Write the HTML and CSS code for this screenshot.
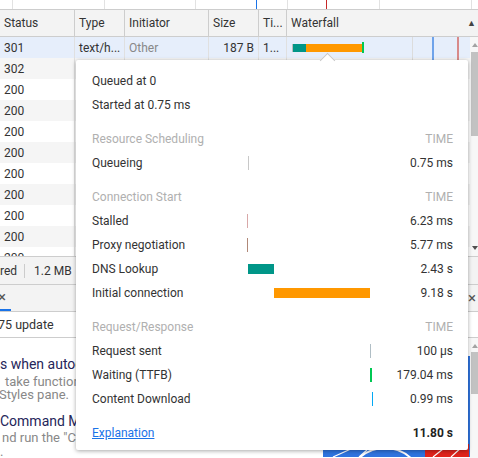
FILE: index.html
```html
<!DOCTYPE html>
<html>
<head>
<meta charset="utf-8">
<link rel="stylesheet" href="styles.css">
</head>
<body>
<div class="app">
  <div class="overview">
    <span class="ov-cell c1"></span><span class="ov-cell c2"></span><span class="ov-cell c3"></span><span class="ov-cell c4"></span><span class="ov-cell c5"></span><span class="ov-cell c6"></span><span class="ov-rest"></span>
    <span class="ov-mark blue" style="left:256px"></span>
    <span class="ov-mark red" style="left:326px"></span>
  </div>

  <div class="hdr">
    <div class="hc w-status">Status</div>
    <div class="hc w-type">Type</div>
    <div class="hc w-init">Initiator</div>
    <div class="hc w-size">Size</div>
    <div class="hc w-time">Ti...</div>
    <div class="hc w-wf">Waterfall<span class="sort">&#9650;</span></div>
  </div>

  <div class="net">
    <div class="rows">
      <div class="row sel">
        <div class="dc w-status">301</div>
        <div class="dc w-type">text/h...</div>
        <div class="dc w-init muted">Other</div>
        <div class="dc w-size right">187 B</div>
        <div class="dc w-time">1...</div>
        <div class="dc w-wf wf">
          <span class="wbar">
            <span class="wq"></span><span class="wd"></span><span class="wc"></span><span class="ww"></span>
          </span>
        </div>
      </div>
      <div class="row"><div class="dc w-status">302</div><div class="dc w-type"></div><div class="dc w-init"></div><div class="dc w-size"></div><div class="dc w-time"></div><div class="dc w-wf wf"></div></div>
      <div class="row"><div class="dc w-status">200</div><div class="dc w-type"></div><div class="dc w-init"></div><div class="dc w-size"></div><div class="dc w-time"></div><div class="dc w-wf wf"></div></div>
      <div class="row"><div class="dc w-status">200</div><div class="dc w-type"></div><div class="dc w-init"></div><div class="dc w-size"></div><div class="dc w-time"></div><div class="dc w-wf wf"></div></div>
      <div class="row"><div class="dc w-status">200</div><div class="dc w-type"></div><div class="dc w-init"></div><div class="dc w-size"></div><div class="dc w-time"></div><div class="dc w-wf wf"></div></div>
      <div class="row"><div class="dc w-status">200</div><div class="dc w-type"></div><div class="dc w-init"></div><div class="dc w-size"></div><div class="dc w-time"></div><div class="dc w-wf wf"></div></div>
      <div class="row"><div class="dc w-status">200</div><div class="dc w-type"></div><div class="dc w-init"></div><div class="dc w-size"></div><div class="dc w-time"></div><div class="dc w-wf wf"></div></div>
      <div class="row"><div class="dc w-status">200</div><div class="dc w-type"></div><div class="dc w-init"></div><div class="dc w-size"></div><div class="dc w-time"></div><div class="dc w-wf wf"></div></div>
      <div class="row"><div class="dc w-status">200</div><div class="dc w-type"></div><div class="dc w-init"></div><div class="dc w-size"></div><div class="dc w-time"></div><div class="dc w-wf wf"></div></div>
      <div class="row"><div class="dc w-status">200</div><div class="dc w-type"></div><div class="dc w-init"></div><div class="dc w-size"></div><div class="dc w-time"></div><div class="dc w-wf wf"></div></div>
      <div class="row"><div class="dc w-status">200</div><div class="dc w-type"></div><div class="dc w-init"></div><div class="dc w-size"></div><div class="dc w-time"></div><div class="dc w-wf wf"></div></div>
    </div>
    <div class="vscroll">
      <span class="arr up"></span>
      <span class="thumb t1"></span>
      <span class="spacer"></span>
      <span class="arr down"></span>
    </div>
  </div>

  <div class="status">
    <span>red</span><span class="sep"></span><span>1.2 MB</span>
  </div>

  <div class="tabs">
    <span class="tab"><span class="x">&#215;</span></span>
    <span class="tabs-fill"></span>
    <span class="x xr">&#215;</span>
  </div>

  <div class="subtab">75 update</div>

  <div class="content">
    <div class="text">
      <div class="h h1">s when autocompleting values</div>
      <div class="d d1">take functions as arguments in the</div>
      <div class="d d2">Styles pane.</div>
      <div class="h h2">Command Menu</div>
      <div class="d d3">nd run the "Capture full size screenshot"</div>
      <div class="d d4">.</div>
    </div>
    <div class="pic">
      <svg width="147" height="101" viewBox="0 0 147 101">
        <rect x="0" y="0" width="147" height="101" fill="#2f74e0"/>
        <rect x="102" y="88" width="44" height="13" fill="#e0241c"/>
        <circle cx="62" cy="130" r="38" fill="none" stroke="#fff" stroke-width="2"/>
        <path d="M10 101 L30 92 M36 101 L44 94 M110 101 L120 93 M128 101 L140 90" stroke="#fff" stroke-width="1.2"/>
      </svg>
    </div>
    <div class="vscroll vs2">
      <span class="arr up"></span>
      <span class="thumb t2"></span>
    </div>
  </div>

  <div class="popup">
    <span class="notch"></span>
    <div class="trow"><span class="lbl">Queued at 0</span></div>
    <div class="trow"><span class="lbl">Started at 0.75 ms</span></div>

    <div class="trow thead"><span>Resource Scheduling</span><span></span><span class="val">TIME</span></div>
    <div class="trow"><span>Queueing</span><span class="bc"><span class="bar thin queue" style="margin-left:0px"></span></span><span class="val">0.75 ms</span></div>

    <div class="trow thead"><span>Connection Start</span><span></span><span class="val">TIME</span></div>
    <div class="trow"><span>Stalled</span><span class="bc"><span class="bar thin stalled" style="margin-left:-1px"></span></span><span class="val">6.23 ms</span></div>
    <div class="trow"><span>Proxy negotiation</span><span class="bc"><span class="bar thin proxy" style="margin-left:-1px"></span></span><span class="val">5.77 ms</span></div>
    <div class="trow"><span>DNS Lookup</span><span class="bc"><span class="bar wide dns" style="margin-left:0px;width:26px"></span></span><span class="val">2.43 s</span></div>
    <div class="trow"><span>Initial connection</span><span class="bc"><span class="bar wide conn" style="margin-left:26px;width:96px"></span></span><span class="val">9.18 s</span></div>

    <div class="trow thead"><span>Request/Response</span><span></span><span class="val">TIME</span></div>
    <div class="trow"><span>Request sent</span><span class="bc"><span class="bar thin send" style="margin-left:122px"></span></span><span class="val">100 µs</span></div>
    <div class="trow"><span>Waiting (TTFB)</span><span class="bc"><span class="bar thin wait" style="margin-left:122px;width:2px"></span></span><span class="val">179.04 ms</span></div>
    <div class="trow"><span>Content Download</span><span class="bc"><span class="bar thin recv" style="margin-left:124px"></span></span><span class="val">0.99 ms</span></div>

    <div class="trow tfoot"><a class="link" href="#">Explanation</a><span></span><span class="val total">11.80 s</span></div>
  </div>
</div>
</body>
</html>
```

FILE: styles.css
```css
* { box-sizing: border-box; }
html, body { margin: 0; padding: 0; }
body {
  width: 478px;
  height: 458px;
  overflow: hidden;
  background: #fff;
  font-family: Roboto, "Noto Sans", sans-serif;
  font-size: 12px;
  color: #333;
}
.app {
  position: relative;
  width: 478px;
  height: 458px;
  overflow: hidden;
  display: flex;
  flex-direction: column;
}

/* overview strip */
.overview {
  position: relative;
  flex: none;
  height: 10px;
  display: flex;
  border-bottom: 1px solid #cdcdcd;
}
.ov-cell { flex: none; height: 100%; border-right: 1px solid #e2e2e2; }
.c1 { width: 13px; }
.c2 { width: 92px; }
.c3 { width: 91px; }
.c4 { width: 92px; }
.c5 { width: 92px; }
.c6 { width: 92px; }
.ov-rest { flex: 1; }
.ov-mark { position: absolute; top: 0; bottom: 0; width: 1px; }
.ov-mark.blue { background: #1a73e8; }
.ov-mark.red { background: #c62828; }

/* column widths */
.w-status { width: 75px; }
.w-type { width: 50px; }
.w-init { width: 84px; }
.w-size { width: 50px; }
.w-time { width: 28px; }
.w-wf { flex: 1; }

/* header */
.hdr {
  flex: none;
  display: flex;
  height: 27px;
  background: #f3f3f3;
  border-bottom: 1px solid #cdcdcd;
}
.hc {
  flex: none;
  display: flex;
  align-items: center;
  padding: 0 4px;
  border-right: 1px solid #cdcdcd;
  white-space: nowrap;
  overflow: hidden;
}
.hc.w-wf { flex: 1; border-right: none; justify-content: space-between; padding-right: 2px; }
.sort { font-size: 9px; color: #444; }

/* rows */
.net {
  flex: none;
  height: 219px;
  display: flex;
}
.rows {
  width: 470px;
  overflow: hidden;
  display: flex;
  flex-direction: column;
}
.row {
  flex: none;
  height: 21px;
  display: flex;
  background: #fff;
}
.row:nth-child(even) { background: #f5f5f5; }
.row.sel { background: #e6eefb; }
.dc {
  flex: none;
  display: flex;
  align-items: center;
  padding: 0 4px;
  border-right: 1px solid #e0e0e0;
  white-space: nowrap;
  overflow: hidden;
}
.dc.right { justify-content: flex-end; }
.dc.muted { color: #888; }
.dc.w-wf { flex: 1; border-right: none; padding: 0; }
.wf {
  background-image: linear-gradient(to right,
    transparent 125px, #dcdcdc 125px, #dcdcdc 126px, transparent 126px,
    transparent 145px, #6fa3ea 145px, #6fa3ea 147px, transparent 147px,
    transparent 170px, #d88a8a 170px, #d88a8a 172px, transparent 172px);
}
.wbar { display: flex; align-items: center; margin-left: 5px; }
.wq { width: 1px; height: 8px; background: #bdbdbd; }
.wd { width: 13px; height: 8px; background: #009688; }
.wc { width: 56px; height: 8px; background: #ff9800; }
.ww { width: 2px; height: 11px; background: #00c853; }

/* scrollbar */
.vscroll {
  flex: none;
  width: 8px;
  display: flex;
  flex-direction: column;
  align-items: flex-end;
  background: #f7f7f7;
}
.arr {
  flex: none;
  width: 0; height: 0;
  margin: 6px 0 5px 0;
  border-left: 3px solid transparent;
  border-right: 3px solid transparent;
}
.arr.up { border-bottom: 4px solid #a3a3a3; }
.arr.down { border-top: 4px solid #505050; margin: 4px 0 6px 0; }
.thumb { flex: none; width: 7px; background: #c2c2c2; }
.t1 { height: 84px; }
.t2 { height: 42px; margin-top: -1px; }
.spacer { flex: 1; }

/* status bar */
.status {
  flex: none;
  height: 28px;
  display: flex;
  align-items: center;
  border-top: 1px solid #cdcdcd;
  background: #f3f3f3;
  white-space: nowrap;
}
.sep { width: 1px; height: 14px; background: #ccc; margin: 0 9px 0 7px; }

/* drawer tabs */
.tabs {
  flex: none;
  height: 28px;
  display: flex;
  align-items: stretch;
  border-top: 1px solid #cdcdcd;
  border-bottom: 1px solid #cdcdcd;
  background: #f3f3f3;
}
.tab {
  width: 11px;
  display: flex;
  align-items: center;
  border-bottom: 2px solid #1a73e8;
}
.x { font-size: 15px; color: #555; line-height: 1; margin-left: -2px; }
.tabs-fill { flex: 1; }
.xr { align-self: center; margin-right: 2px; }

.subtab {
  flex: none;
  height: 26px;
  display: flex;
  align-items: center;
  border-bottom: 1px solid #cdcdcd;
  font-size: 12.5px;
  white-space: nowrap;
  text-indent: -2px;
  overflow: hidden;
}

/* drawer content */
.content {
  flex: 1;
  display: flex;
  overflow: hidden;
}
.text {
  flex: 1;
  overflow: hidden;
  padding-top: 17px;
  white-space: nowrap;
}
.h { font-size: 14px; line-height: 18px; color: #25255a; }
.d { font-size: 13px; line-height: 13px; color: #888; }
.d1 { margin-top: 2px; padding-left: 5px; }
.d2 { text-indent: -1px; }
.h2 { margin-top: 11px; }
.d3 { line-height: 14px; padding-left: 2px; margin-top: 1px; }
.d4 { line-height: 14px; }
.pic { flex: none; width: 147px; padding-top: 18px; }
.pic svg { display: block; }
.vs2 { background: #f7f7f7; }

/* timing popup */
.popup {
  position: absolute;
  left: 76px;
  top: 60px;
  width: 392px;
  height: 390px;
  background: #fff;
  border-radius: 2px;
  box-shadow: 0 1px 4px rgba(0,0,0,0.35);
  padding: 9px 15px 5px 16px;
}
.notch {
  position: absolute;
  left: 246px;
  top: -5px;
  width: 11px;
  height: 11px;
  background: #fff;
  border-left: 1px solid #c8c8c8;
  border-top: 1px solid #c8c8c8;
  transform: rotate(45deg);
}
.trow {
  position: relative;
  display: grid;
  grid-template-columns: 156px 126px 1fr;
  height: 24px;
  align-items: center;
  white-space: nowrap;
}
.trow .lbl { grid-column: 1 / 4; }
.thead { height: 34px; padding-top: 10px; color: #b0b0b0; }
.tfoot { height: 34px; padding-top: 10px; }
.val { text-align: right; }
.total { font-weight: bold; color: #222; }
.link { color: #1a73e8; text-decoration: underline; }
.bc { display: flex; align-items: center; height: 100%; }
.bar { display: block; flex: none; }
.bar.thin { width: 1px; height: 14px; }
.bar.wide { height: 10px; }
.queue { background: #c8c8c8; }
.stalled { background: #d8a8a8; }
.proxy { background: #b08878; }
.dns { background: #009688; }
.conn { background: #ff9800; }
.send { background: #b0bec5; height: 15px; }
.wait { background: #00c853; height: 15px; }
.recv { background: #03a9f4; height: 15px; }
```
